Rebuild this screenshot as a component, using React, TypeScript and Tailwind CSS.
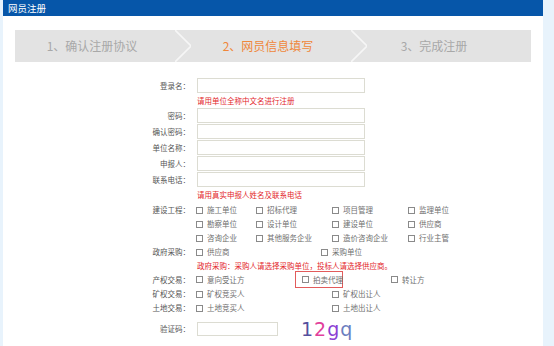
const FONT = { fontFamily: '"Noto Sans CJK SC", "Noto Sans", sans-serif' };

function Box() {
  return <span className="inline-block w-[7px] h-[7px] border border-[#8a8a8a] bg-white shrink-0" />;
}

function Option({ label, width }: { label: string; width?: string }) {
  return (
    <span className={`flex items-center gap-[4px] ${width ?? ''}`}>
      <Box />
      <span className="text-[#6f6f6f] whitespace-nowrap">{label}</span>
    </span>
  );
}

function Label({ text }: { text: string }) {
  return <div className="w-[70px] text-right text-[#555] whitespace-nowrap">{text}</div>;
}

function InputRow({ label, className }: { label: string; className?: string }) {
  return (
    <div className={`flex items-center h-[15px] ${className ?? ''}`}>
      <Label text={label} />
      <div className="ml-[7px] w-[168px] h-[15px] border border-[#dcdcd2] bg-white" />
    </div>
  );
}

function Hint({ text, className }: { text: string; className?: string }) {
  return (
    <div className={`flex items-center ${className ?? ''}`}>
      <div className="w-[77px]" />
      <span className="text-[#e3262b] whitespace-nowrap">{text}</span>
    </div>
  );
}

function Chevron() {
  return (
    <svg width="16" height="32" viewBox="0 0 16 32" className="shrink-0">
      <polyline points="0,0 16,16 0,32" fill="none" stroke="#f6f6f6" strokeWidth="1.6" />
    </svg>
  );
}

export default function App() {
  const build = [
    ['施工单位', '招标代理', '项目管理', '监理单位'],
    ['勘察单位', '设计单位', '建设单位', '供应商'],
    ['咨询企业', '其他服务企业', '造价咨询企业', '行业主管'],
  ];

  return (
    <div className="w-[554px] h-[346px] bg-[#e8f3fc] flex overflow-hidden" style={FONT}>
      <div className="ml-[3px] w-[540px] h-full bg-white flex flex-col">
        {/* Header */}
        <div className="h-[16px] bg-[#0656a9] text-white text-[9.5px] pl-[5px] flex items-center">网员注册</div>

        {/* Steps */}
        <div className="mt-[14px] ml-[12px] w-[516px] h-[32px] bg-[#e3e3e3] flex items-center text-[12px]">
          <div className="w-[160px] pr-[6px] text-center text-[#a8a8a8]">1、确认注册协议</div>
          <Chevron />
          <div className="w-[160px] pr-[6px] text-center text-[#f0873a]">2、网员信息填写</div>
          <Chevron />
          <div className="flex-1 pr-[30px] text-center text-[#a8a8a8]">3、完成注册</div>
        </div>

        {/* Form */}
        <div className="pl-[117px] mt-[16px] text-[7.5px] leading-none">
          <InputRow label="登录名：" />
          <Hint text="请用单位全称中文名进行注册" className="h-[15px]" />
          <InputRow label="密码：" className="mb-[1px]" />
          <InputRow label="确认密码：" className="mb-[1px]" />
          <InputRow label="单位名称：" className="mb-[1px]" />
          <InputRow label="申报人：" className="mb-[1px]" />
          <InputRow label="联系电话：" />
          <Hint text="请用真实申报人姓名及联系电话" className="h-[16px]" />

          {build.map((row, i) => (
            <div key={i} className="flex items-center h-[14px]">
              <Label text={i === 0 ? '建设工程：' : ''} />
              <div className="ml-[6px] grid grid-cols-[60px_76px_76px_1fr] items-center">
                {row.map((o) => (
                  <Option key={o} label={o} />
                ))}
              </div>
            </div>
          ))}

          <div className="flex items-center h-[14px]">
            <Label text="政府采购：" />
            <div className="ml-[6px] flex items-center">
              <Option label="供应商" width="w-[125px]" />
              <Option label="采购单位" />
            </div>
          </div>

          <Hint text="政府采购：采购人请选择采购单位，投标人请选择供应商。" className="h-[13px]" />

          <div className="flex items-center h-[15px]">
            <Label text="产权交易：" />
            <div className="ml-[6px] flex items-center">
              <Option label="意向受让方" width="w-[99px]" />
              <div className="h-[17px] w-[48px] border border-[#e25b5b] flex items-center pl-[6px]">
                <Option label="拍卖代理" />
              </div>
              <div className="ml-[48px]">
                <Option label="转让方" />
              </div>
            </div>
          </div>

          <div className="flex items-center h-[14px]">
            <Label text="矿权交易：" />
            <div className="ml-[6px] flex items-center">
              <Option label="矿权竞买人" width="w-[136px]" />
              <Option label="矿权出让人" />
            </div>
          </div>

          <div className="flex items-center h-[14px]">
            <Label text="土地交易：" />
            <div className="ml-[6px] flex items-center">
              <Option label="土地竞买人" width="w-[136px]" />
              <Option label="土地出让人" />
            </div>
          </div>

          <div className="flex items-center h-[14px] mt-[7px]">
            <Label text="验证码：" />
            <div className="ml-[7px] w-[81px] h-[14px] border border-[#dcdcd2] bg-white" />
            <div
              className="ml-[23px] text-[19px] tracking-[1px] leading-none flex"
              style={{ fontFamily: '"DejaVu Sans", sans-serif' }}
            >
              <span className="text-[#55509e]">1</span>
              <span className="text-[#e2409b]">2</span>
              <span className="text-[#8c3fd4]">g</span>
              <span className="text-[#6c7ec0]">q</span>
            </div>
          </div>
        </div>
      </div>
    </div>
  );
}
